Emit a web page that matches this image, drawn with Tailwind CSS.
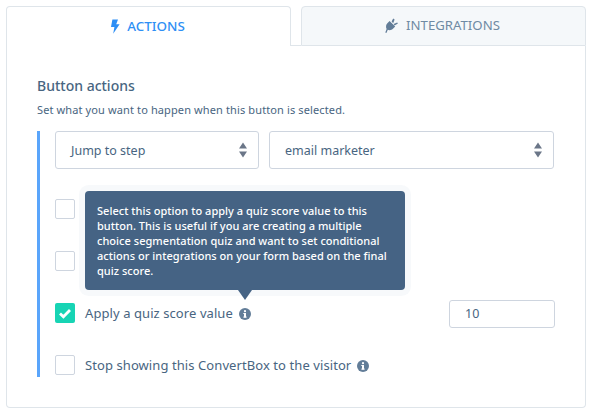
<!doctype html>
<html><head><meta charset="utf-8"><script src="https://cdn.jsdelivr.net/npm/@tailwindcss/browser@4"></script></head>
<body class="bg-white">
<div class="w-[594px] h-[414px] pt-[6px] pl-[6px] font-['Noto_Sans',sans-serif] text-[#486581] overflow-hidden">
  <div class="w-[580px] h-[402px] flex flex-col">
    <div class="flex h-[40px] shrink-0">
      <div class="w-[285px] h-[40px] border border-b-0 border-[#dfe5ea] rounded-t-[4px] bg-white flex items-center justify-center gap-[7px] pr-[2px] text-[#2e8ff5] text-[13.4px] font-medium relative z-10">
        <svg width="10" height="15" viewBox="0 0 10 15"><path d="M2.4 0.5H8L6.2 5.2H9.6L3.2 14.8L4.4 8H1Z" fill="#2e8ff5"/></svg>
        <span>ACTIONS</span>
      </div>
      <div class="w-[10px] border-b border-[#dfe5ea]"></div>
      <div class="w-[285px] h-[40px] border border-[#dfe5ea] rounded-t-[4px] bg-[#f5f8fa] flex items-center justify-center gap-[8px] pb-[1px] pr-[2px] text-[#6f8aa3] text-[13.2px]">
        <svg width="13" height="15" viewBox="0 0 13 15"><path d="M0.3 14.4L1.6 11C0.6 9 0.9 6.6 2.6 5L4.6 3L10.2 8.6L8.2 10.6C6.6 12.2 4.6 12.6 2.8 11.8L1.4 15Z" fill="#627d98"/><path d="M6.6 3.6L8.2 0.6L9.6 1.4L8.2 5.2ZM8.6 6L12.2 4.4L12.9 5.6L9.6 7.6Z" fill="#627d98"/></svg>
        <span>INTEGRATIONS</span>
      </div>
    </div>
    <div class="h-[362px] border border-t-0 border-[#dfe5ea] rounded-b-[4px] pl-[30px] pr-[30px] pt-[30px]">
      <h2 class="text-[14px] leading-[20px] font-medium text-[#486581]">Button actions</h2>
      <p class="mt-[6px] text-[11px] leading-[16px] tracking-[0.12px] text-[#486581]">Set what you want to happen when this button is selected.</p>
      <div class="mt-[13px] w-[518px] h-[246px] border-l-[3px] border-[#5aa5fb] pl-[15px] relative">
        <div class="flex gap-[10px]">
          <div class="w-[204px] h-[38px] border border-[#ced5df] rounded-[3px] flex items-center justify-between pl-[15px] pr-[10px] text-[12.5px]">
            <span class="mt-[2px]">Jump to step</span>
            <svg width="10" height="16" viewBox="0 0 10 16"><path d="M5 0.5L9 6.5H1Z M1 9.5H9L5 15.5Z" fill="#6b7688"/></svg>
          </div>
          <div class="w-[285px] h-[38px] border border-[#ced5df] rounded-[3px] flex items-center justify-between pl-[15px] pr-[10px] text-[12.5px]">
            <span class="mt-[2px]">email marketer</span>
            <svg width="10" height="16" viewBox="0 0 10 16"><path d="M5 0.5L9 6.5H1Z M1 9.5H9L5 15.5Z" fill="#6b7688"/></svg>
          </div>
        </div>
        <div class="mt-[30px] flex flex-col gap-[32px]">
          <div class="w-[20px] h-[20px] border border-[#ced5df] rounded-[2px]"></div>
          <div class="w-[20px] h-[20px] border border-[#ced5df] rounded-[2px]"></div>
          <div class="flex items-center h-[20px]">
            <div class="w-[20px] h-[20px] rounded-[2px] bg-[#17d4b4] flex items-center justify-center">
              <svg width="14" height="11" viewBox="0 0 14 11"><path d="M2 5.5L5.4 8.8L12 2" fill="none" stroke="#fff" stroke-width="2.8"/></svg>
            </div>
            <span class="ml-[10px] mt-[2px] text-[13px] tracking-[0.08px]">Apply a quiz score value</span>
            <svg class="ml-[6px] mt-[2px]" width="12" height="12" viewBox="0 0 12 12"><circle cx="6" cy="6" r="6" fill="#627d98"/><rect x="5" y="5" width="2" height="4.5" fill="#fff"/><rect x="4.3" y="8.6" width="3.4" height="1" fill="#fff"/><rect x="4.3" y="5" width="2" height="1" fill="#fff"/><circle cx="6" cy="3.2" r="1.1" fill="#fff"/></svg>
            <div class="ml-auto mt-[2px] w-[106px] h-[28px] border border-[#ced5df] rounded-[3px] flex items-center pl-[15px] text-[12.5px]">10</div>
          </div>
          <div class="flex items-center h-[20px]">
            <div class="w-[20px] h-[20px] border border-[#ced5df] rounded-[2px]"></div>
            <span class="ml-[10px] mt-[2px] text-[13px] tracking-[0.08px]">Stop showing this ConvertBox to the visitor</span>
            <svg class="ml-[6px] mt-[2px]" width="12" height="12" viewBox="0 0 12 12"><circle cx="6" cy="6" r="6" fill="#627d98"/><rect x="5" y="5" width="2" height="4.5" fill="#fff"/><rect x="4.3" y="8.6" width="3.4" height="1" fill="#fff"/><rect x="4.3" y="5" width="2" height="1" fill="#fff"/><circle cx="6" cy="3.2" r="1.1" fill="#fff"/></svg>
          </div>
        </div>
        <div class="absolute left-[45px] top-[60px] w-[320px] h-[99px] bg-[#456384] rounded-[4px] shadow-[0_0_0_6px_rgba(240,244,248,0.5)] pl-[12px] pt-[12px] text-white text-[11px] leading-[15px] tracking-[0.03px] font-medium">
          Select this option to apply a quiz score value to this<br>button. This is useful if you are creating a multiple<br>choice segmentation quiz and want to set conditional<br>actions or integrations on your form based on the final<br>quiz score.
          <div class="absolute left-[153px] top-[99px] w-0 h-0 border-l-[7px] border-r-[7px] border-t-[10px] border-l-transparent border-r-transparent border-t-[#456384]"></div>
        </div>
      </div>
    </div>
  </div>
</div>
</body></html>
